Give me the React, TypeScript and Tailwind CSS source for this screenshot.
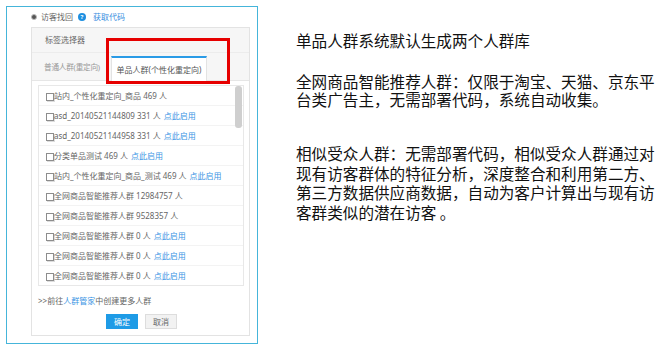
import React from "react";

const rows: { t: string; link: boolean }[] = [
  { t: "站内_个性化重定向_商品 469 人", link: false },
  { t: "asd_20140521144809 331 人", link: true },
  { t: "asd_20140521144958 331 人", link: true },
  { t: "分类单品测试 469 人", link: true },
  { t: "站内_个性化重定向_商品_测试 469 人", link: true },
  { t: "全网商品智能推荐人群 12984757 人", link: false },
  { t: "全网商品智能推荐人群 9528357 人", link: false },
  { t: "全网商品智能推荐人群 0 人", link: true },
  { t: "全网商品智能推荐人群 0 人", link: true },
  { t: "全网商品智能推荐人群 0 人", link: true },
];

export default function App() {
  return (
    <div
      className="w-[669px] h-[350px] bg-white relative flex overflow-hidden"
      style={{ fontFamily: '"Noto Sans","Noto Sans CJK SC",sans-serif' }}
    >
      {/* left screenshot panel */}
      <div className="ml-[6px] mt-[6px] w-[252px] h-[338px] border border-[#45b5da] flex flex-col shrink-0">
        <div className="h-[20px] ml-[24px] flex items-center text-[8px] leading-[10px] text-[#666]">
          <span className="w-[6px] h-[6px] rounded-full bg-[#555] border border-[#bbb] mr-[4px]" />
          <span>访客找回</span>
          <span className="ml-[5px] w-[8px] h-[8px] rounded-full bg-[#1e8fe0] text-white text-[6px] leading-[8px] flex items-center justify-center font-bold">?</span>
          <span className="ml-[7px] text-[#3a8ee0]">获取代码</span>
        </div>
        <div className="ml-[24px] w-[219px] h-[309px] border border-[#e3e3e3] flex flex-col">
          <div className="h-[25px] bg-[#f6f6f6] border-b border-[#ececec] flex items-center pl-[13px] text-[8px] text-[#666]">
            标签选择器
          </div>
          <div className="h-[28px] bg-[#f6f6f6] border-b border-[#e6e6e6] flex items-end text-[8px]">
            <div className="h-[24px] w-[79px] shrink-0 flex items-center pl-[12px] text-[#999] whitespace-nowrap text-[7.6px] tracking-[-0.2px]">普通人群(重定向)</div>
            <div className="h-[25px] w-[96px] -mb-[1px] bg-white border-t-2 border-t-[#2a9be6] border-x border-x-[#e3e3e3] flex items-center justify-center text-[#555] whitespace-nowrap">
              单品人群(个性化重定向)
            </div>
          </div>
          <div className="pl-[6px] pt-[4px]">
            <div className="w-[206px] h-[201px] border border-[#e8e8e8] relative overflow-hidden">
              {rows.map((r, i) => (
                <div
                  key={i}
                  className="h-[20px] flex items-center pl-[7px] border-b border-[#f3f3f3] text-[8px] text-[#666] whitespace-nowrap"
                >
                  <span className="w-[8px] h-[8px] border border-[#8d8d8d] bg-white mt-[3px] shrink-0 shadow-[1px_1px_0_#ddd]" />
                  <span>{r.t}</span>
                  {r.link && <span className="ml-[3px] text-[#3a94e4]">点此启用</span>}
                </div>
              ))}
              <div className="absolute right-[1px] top-[0px] w-[7px] h-[42px] rounded-[3px] bg-[#cfcfcf]" />
            </div>
          </div>
          <div className="pl-[6px] mt-[10px] text-[8px] leading-[10px] text-[#666] whitespace-nowrap">
            &gt;&gt;前往<span className="text-[#3a94e4]">人群管家</span>中创建更多人群
          </div>
          <div className="mt-[8px] flex pl-[74px] gap-[7px]">
            <div className="w-[32px] h-[15px] bg-[#1e9be6] text-white text-[8px] flex items-center justify-center">确定</div>
            <div className="w-[32px] h-[15px] bg-[#f2f2f2] border border-[#ddd] text-[#666] text-[8px] flex items-center justify-center">取消</div>
          </div>
        </div>
      </div>

      {/* red highlight */}
      <div className="absolute left-[106px] top-[38px] w-[124px] h-[46px] border-[3px] border-[#e60000]" />

      {/* right text */}
      <div
        className="ml-[38px] text-[15.6px] text-[#111] whitespace-nowrap"
        style={{ fontFamily: '"Noto Sans CJK SC",sans-serif' }}
      >
        <div className="mt-[31px] leading-[18px]">单品人群系统默认生成两个人群库</div>
        <div className="mt-[23px] leading-[18px]">
          全网商品智能推荐人群：仅限于淘宝、天猫、京东平
          <br />
          台类广告主，无需部署代码，系统自动收集。
        </div>
        <div className="mt-[36px] leading-[19.7px]">
          相似受众人群：无需部署代码，相似受众人群通过对
          <br />
          现有访客群体的特征分析，深度整合和利用第二方、
          <br />
          第三方数据供应商数据，自动为客户计算出与现有访
          <br />
          客群类似的潜在访客 。
        </div>
      </div>
    </div>
  );
}
